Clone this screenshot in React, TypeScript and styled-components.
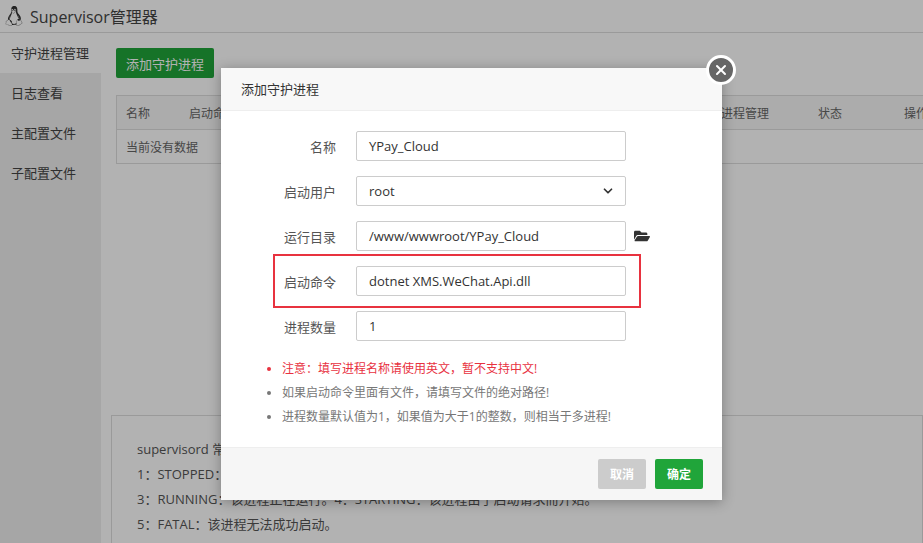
import React from "react";
import styled, { createGlobalStyle } from "styled-components";
import { FaFolderOpen, FaLinux } from "react-icons/fa";
import { ChevronDown, X } from "lucide-react";

const Global = createGlobalStyle`
  html, body { margin: 0; padding: 0; }
  body { font-family: "Open Sans", "Noto Sans CJK SC", sans-serif; font-size: 12px; color: #555; width: 923px; height: 543px; overflow: hidden; position: relative; background: #fff; }
`;

const Header = styled.div`
  height: 33px; display: flex; align-items: center; gap: 6px; padding-left: 4px;
  font-size: 16px; color: #444; border-bottom: 1px solid #ddd; box-sizing: border-box;
`;
const Body = styled.div` display: flex; height: 510px; overflow: hidden; `;
const Side = styled.div` width: 101px; flex-shrink: 0; background: #eee; `;
const SideItem = styled.div<{ $active?: boolean }>`
  height: 40px; line-height: 40px; padding-left: 11px; font-size: 13px; color: #444; white-space: nowrap;
  background: ${(p) => (p.$active ? "#fff" : "transparent")};
`;
const Main = styled.div` flex: 1; min-width: 0; padding: 15px 0 0 15px; `;
const GreenBtn = styled.button`
  background: #20a53a; color: #fff; border: none; border-radius: 2px; height: 30px; padding: 0 10px;
  font-family: inherit; font-size: 13px;
`;
const Table = styled.div` margin-top: 17px; border: 1px solid #ddd; border-right: none; `;
const Row = styled.div<{ $head?: boolean }>`
  height: 33px; display: flex; align-items: center; font-size: 12px; color: #666; white-space: nowrap;
  padding-left: ${(p) => (p.$head ? 0 : 9)}px;
  background: ${(p) => (p.$head ? "#f6f6f6" : "#fff")}; border-bottom: ${(p) => (p.$head ? "1px solid #ddd" : "none")};
`;
const Cell = styled.div<{ $w: number }>` width: ${(p) => p.$w}px; padding-left: 9px; flex-shrink: 0; box-sizing: border-box; `;
const Tips = styled.div`
  margin-top: 251px; margin-left: -5px; border: 1px solid #ddd; padding: 26px 20px 0 25px; height: 200px;
  font-size: 13px; color: #555; white-space: nowrap; p { margin: 0 0 10px; line-height: 15px; }
`;

const Shade = styled.div` position: absolute; inset: 0; background: rgba(0,0,0,0.3); `;
const Modal = styled.div`
  position: absolute; left: 221px; top: 68px; width: 501px; background: #fff;
  box-shadow: 0 2px 12px rgba(0,0,0,0.3);
`;
const MHead = styled.div`
  height: 42px; line-height: 42px; padding-left: 20px; font-size: 13px; color: #333;
  background: #f8f8f8; border-bottom: 1px solid #eee;
`;
const Close = styled.div`
  position: absolute; right: -14px; top: -13px; width: 24px; height: 24px; border-radius: 50%;
  background: #666; border: 3px solid #fff; color: #fff; display: flex; align-items: center; justify-content: center;
`;
const Form = styled.div` padding: 20px 0 0; `;
const FRow = styled.div` display: flex; align-items: center; height: 30px; margin-bottom: 15px; position: relative; `;
const Label = styled.div` width: 115px; text-align: right; color: #555; font-size: 13px; padding-right: 20px; `;
const Input = styled.div`
  width: 270px; height: 30px; box-sizing: border-box; border: 1px solid #ccc; border-radius: 2px;
  display: flex; align-items: center; padding: 0 10px 0 12px; font-size: 13px; color: #333; justify-content: space-between;
`;
const Highlight = styled.div`
  position: absolute; left: 52px; top: -12px; width: 364px; height: 50px; border: 2px solid #e8323f;
`;
const Notes = styled.ul`
  margin: 16px 0 0; padding-left: 61px; font-size: 12px; color: #777; li { line-height: 24px; }
`;
const Note = styled.li<{ $red?: boolean }>` color: ${(p) => (p.$red ? "#e8323f" : "#777")}; `;
const Foot = styled.div`
  margin-top: 18px; height: 52px; background: #f6f6f6; border-top: 1px solid #eee;
  display: flex; justify-content: flex-end; align-items: center; gap: 9px; padding-right: 19px;
`;
const Btn = styled.button<{ $gray?: boolean }>`
  height: 30px; padding: 0 12px; border: none; border-radius: 2px; font-family: inherit; font-size: 12px; font-weight: bold;
  color: #fff; background: ${(p) => (p.$gray ? "#ccc" : "#20a53a")};
`;

export default function App() {
  return (
    <>
      <Global />
      <Header><FaLinux size={20} color="#333" />Supervisor管理器</Header>
      <Body>
        <Side>
          <SideItem $active>守护进程管理</SideItem>
          <SideItem>日志查看</SideItem>
          <SideItem>主配置文件</SideItem>
          <SideItem>子配置文件</SideItem>
        </Side>
        <Main>
          <GreenBtn>添加守护进程</GreenBtn>
          <Table>
            <Row $head>
              <Cell $w={63}>名称</Cell><Cell $w={532}>启动命令</Cell><Cell $w={97}>进程管理</Cell><Cell $w={86}>状态</Cell><Cell $w={40}>操作</Cell>
            </Row>
            <Row>当前没有数据</Row>
          </Table>
          <Tips>
            <p>supervisord 常见状态说明</p>
            <p>1：STOPPED：该进程已停止。2：STOPPING：该进程正在停止。</p>
            <p>3：RUNNING：该进程正在运行。4：STARTING：该进程由于启动请求而开始。</p>
            <p>5：FATAL：该进程无法成功启动。</p>
            <p>6：BACKOFF：该进程进入“启动”状态，但随后退出的速度太快而无法移至“运行”状态。</p>
          </Tips>
        </Main>
      </Body>
      <Shade />
      <Modal>
        <Close><X size={16} strokeWidth={3} /></Close>
        <MHead>添加守护进程</MHead>
        <Form>
          <FRow><Label>名称</Label><Input>YPay_Cloud</Input></FRow>
          <FRow><Label>启动用户</Label><Input>root<ChevronDown size={14} strokeWidth={3} /></Input></FRow>
          <FRow><Label>运行目录</Label><Input>/www/wwwroot/YPay_Cloud</Input><FaFolderOpen style={{ marginLeft: 8 }} size={16} color="#333" /></FRow>
          <FRow><Highlight /><Label>启动命令</Label><Input>dotnet XMS.WeChat.Api.dll</Input></FRow>
          <FRow><Label>进程数量</Label><Input>1</Input></FRow>
        </Form>
        <Notes>
          <Note $red>注意：填写进程名称请使用英文，暂不支持中文!</Note>
          <Note>如果启动命令里面有文件，请填写文件的绝对路径!</Note>
          <Note>进程数量默认值为1，如果值为大于1的整数，则相当于多进程!</Note>
        </Notes>
        <Foot><Btn $gray>取消</Btn><Btn>确定</Btn></Foot>
      </Modal>
    </>
  );
}
